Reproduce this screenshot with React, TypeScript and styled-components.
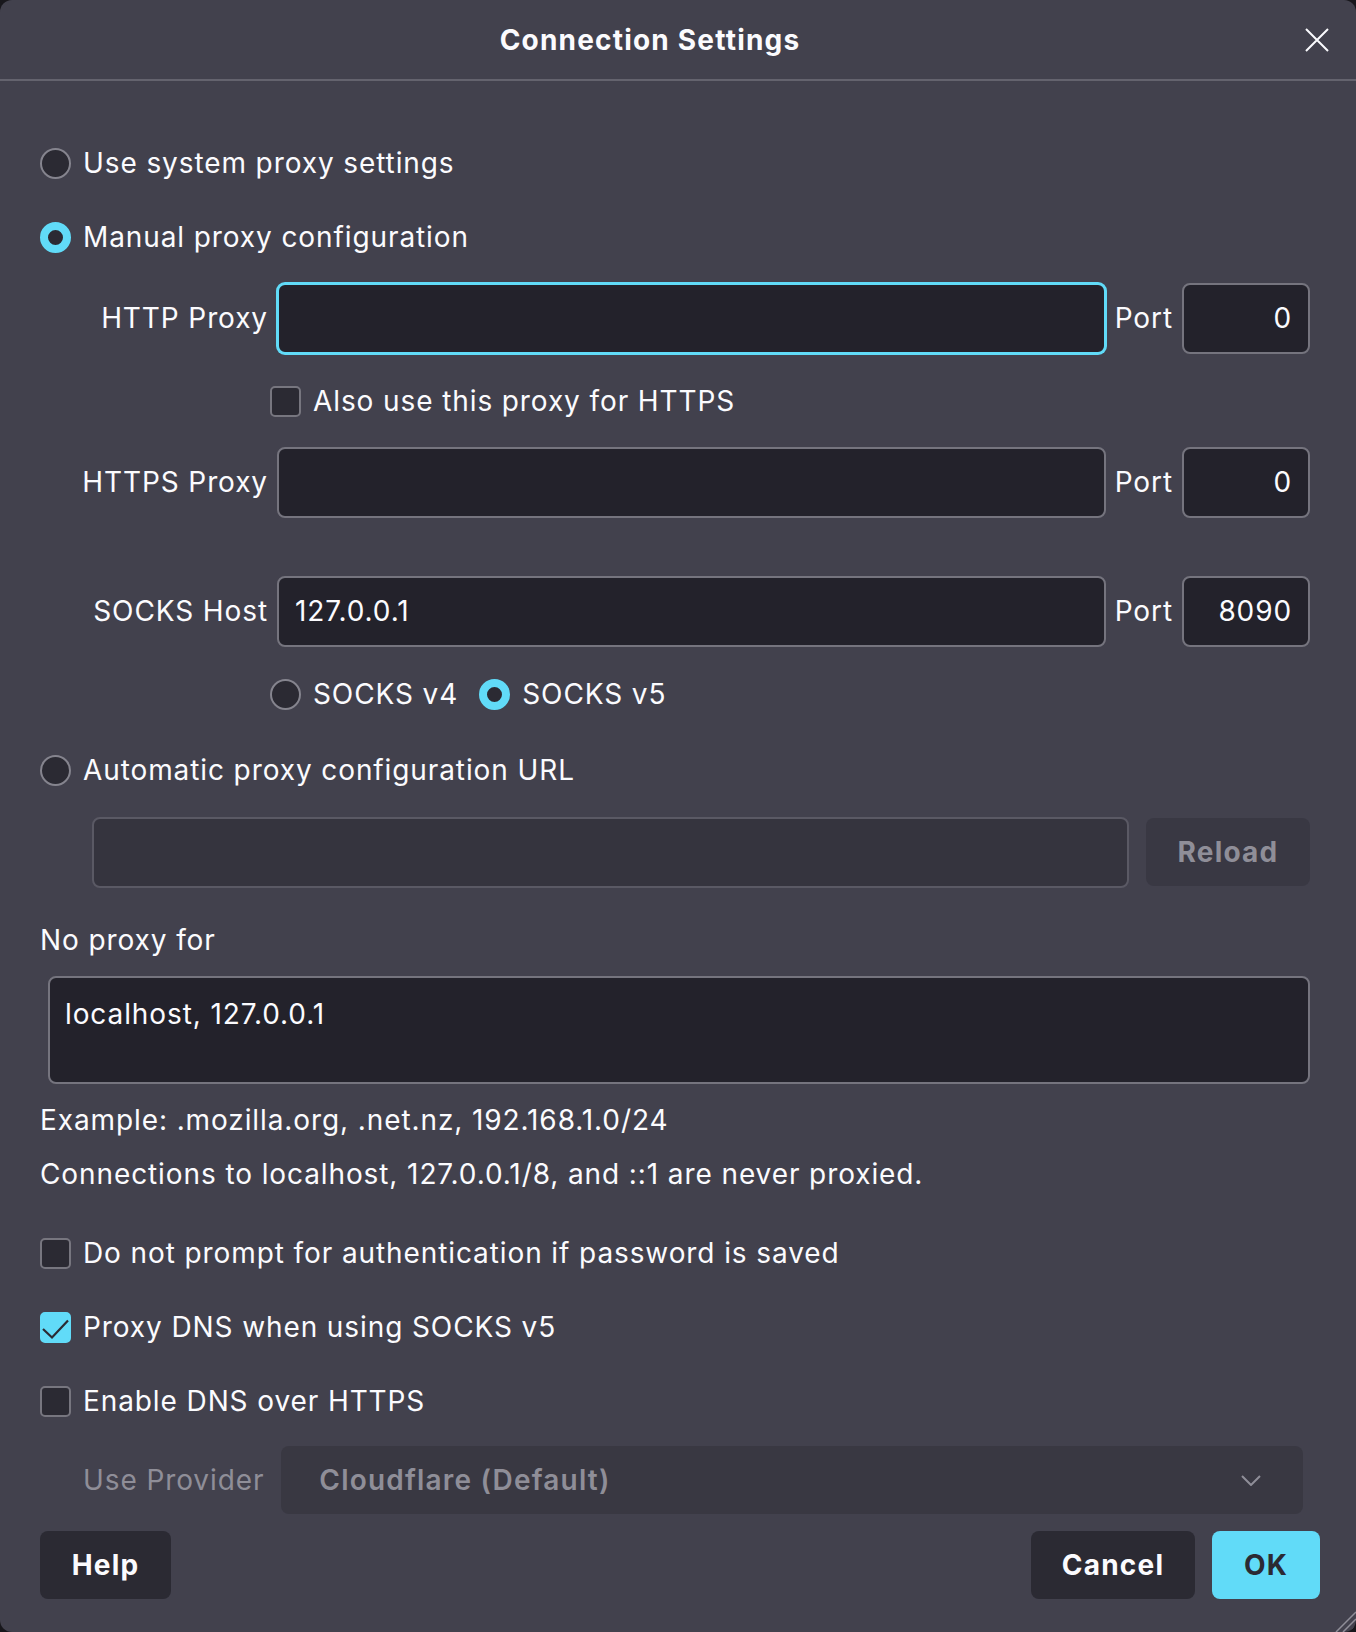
import React from "react";
import styled, { createGlobalStyle } from "styled-components";

const accent = "#61dbf8";

const GlobalStyle = createGlobalStyle`
  html, body {
    margin: 0;
    padding: 0;
    background: #18171c;
  }
  body {
    font-family: Inter, "Noto Sans", sans-serif;
    color: #fbfbfe;
  }
`;

const Dialog = styled.div`
  position: relative;
  width: 1356px;
  height: 1632px;
  box-sizing: border-box;
  background: #42414d;
  border-radius: 12px;
  overflow: hidden;
  display: flex;
  flex-direction: column;
  font-size: 28px;
  letter-spacing: 0.9px;
`;

const Header = styled.header`
  height: 79px;
  border-bottom: 2px solid #64636e;
  display: flex;
  align-items: center;
`;

const Title = styled.h1`
  flex: 1;
  margin: 0;
  text-align: center;
  font-size: 28px;
  font-weight: 700;
  letter-spacing: 1.2px;
`;

const CloseButton = styled.button`
  width: 56px;
  height: 56px;
  padding: 0 27px 0 0;
  border: 0;
  background: transparent;
  display: flex;
  align-items: center;
  justify-content: flex-end;
`;

const Body = styled.div`
  flex: 1;
  display: flex;
  flex-direction: column;
  padding: 0 46px 0 40px;
`;

const Row = styled.div<{ $mt: number; $h?: number; $indent?: number; $gap?: number }>`
  display: flex;
  align-items: center;
  flex: none;
  margin-top: ${(p) => p.$mt}px;
  height: ${(p) => p.$h ?? 40}px;
  padding-left: ${(p) => p.$indent ?? 0}px;
  gap: ${(p) => p.$gap ?? 12}px;
`;

const Radio = styled.span<{ $on?: boolean }>`
  flex: none;
  width: 31px;
  height: 31px;
  box-sizing: border-box;
  border-radius: 50%;
  background: #2b2a33;
  border: ${(p) => (p.$on ? `8px solid ${accent}` : "2px solid #85848e")};
`;

const Check = styled.span<{ $on?: boolean }>`
  flex: none;
  width: 31px;
  height: 31px;
  box-sizing: border-box;
  border-radius: 5px;
  background: ${(p) => (p.$on ? accent : "#2b2a33")};
  border: 2px solid ${(p) => (p.$on ? accent : "#77767f")};
  display: grid;
  place-items: center;
`;

const Label = styled.span<{ $muted?: boolean }>`
  white-space: nowrap;
  color: ${(p) => (p.$muted ? "#8f8e98" : "#fbfbfe")};
`;

const FieldLabel = styled.label`
  flex: none;
  width: 228px;
  text-align: right;
  white-space: nowrap;
`;

const Input = styled.input<{ $focus?: boolean; $w?: number; $align?: string }>`
  flex: ${(p) => (p.$w ? "none" : "1")};
  width: ${(p) => (p.$w ? `${p.$w}px` : "auto")};
  min-width: 0;
  height: 71px;
  box-sizing: border-box;
  margin: 0;
  padding: 0 16px;
  border-radius: 8px;
  background: #23222b;
  border: 2px solid ${(p) => (p.$focus ? accent : "#75747e")};
  box-shadow: ${(p) => (p.$focus ? `0 0 0 1px ${accent}` : "none")};
  color: #fbfbfe;
  font: inherit;
  letter-spacing: inherit;
  text-align: ${(p) => p.$align ?? "left"};
  outline: none;

  &:disabled {
    background: #35343e;
    border-color: #5a5964;
  }
`;

const TextArea = styled.textarea`
  display: block;
  flex: none;
  height: 108px;
  margin: 16px 0 0 8px;
  box-sizing: border-box;
  padding: 16px 15px;
  border-radius: 8px;
  background: #23222b;
  border: 2px solid #75747e;
  color: #fbfbfe;
  font: inherit;
  letter-spacing: inherit;
  line-height: 40px;
  resize: none;
  outline: none;
`;

const Button = styled.button<{ $primary?: boolean; $w: number; $disabled?: boolean }>`
  flex: none;
  width: ${(p) => p.$w}px;
  height: 68px;
  border: 0;
  border-radius: 8px;
  font: inherit;
  font-weight: 700;
  letter-spacing: 1.2px;
  background: ${(p) => (p.$primary ? accent : p.$disabled ? "#393843" : "#2b2a33")};
  color: ${(p) => (p.$primary ? "#2b2a33" : p.$disabled ? "#8f8e98" : "#fbfbfe")};
`;

const Select = styled.div`
  flex: 1;
  height: 68px;
  margin-right: 7px;
  box-sizing: border-box;
  padding: 0 42px 0 38px;
  border-radius: 8px;
  background: #393842;
  color: #8f8e98;
  font-weight: 600;
  letter-spacing: 1.2px;
  display: flex;
  align-items: center;
  justify-content: space-between;
`;

const Footer = styled.div`
  display: flex;
  align-items: center;
  justify-content: space-between;
  margin: 17px -10px 0 0;
  height: 68px;
`;

const ButtonGroup = styled.div`
  display: flex;
  gap: 17px;
`;

const Grip = styled.svg`
  position: absolute;
  right: 0;
  bottom: 0;
`;

function CheckMark() {
  return (
    <svg width="27" height="27" viewBox="0 0 27 27">
      <polyline points="1,15 10,23.5 26,6.5" fill="none" stroke="#2b2a33" strokeWidth="2.2" />
    </svg>
  );
}

export default function App() {
  return (
    <>
      <GlobalStyle />
      <Dialog>
        <Header>
          <Title>Connection Settings</Title>
          <CloseButton aria-label="Close">
            <svg width="24" height="24" viewBox="0 0 24 24">
              <path d="M1 1 L23 23 M23 1 L1 23" stroke="#fbfbfe" strokeWidth="2" />
            </svg>
          </CloseButton>
        </Header>
        <Body>
          <Row $mt={62}>
            <Radio />
            <Label>Use system proxy settings</Label>
          </Row>
          <Row $mt={34}>
            <Radio $on />
            <Label>Manual proxy configuration</Label>
          </Row>
          <Row $mt={25} $h={72} $gap={9}>
            <FieldLabel>HTTP Proxy</FieldLabel>
            <Input $focus readOnly value="" />
            <Label>Port</Label>
            <Input $w={128} $align="right" readOnly value="0" />
          </Row>
          <Row $mt={27} $indent={230}>
            <Check />
            <Label>Also use this proxy for HTTPS</Label>
          </Row>
          <Row $mt={25} $h={72} $gap={9}>
            <FieldLabel>HTTPS Proxy</FieldLabel>
            <Input readOnly value="" />
            <Label>Port</Label>
            <Input $w={128} $align="right" readOnly value="0" />
          </Row>
          <Row $mt={57} $h={72} $gap={9}>
            <FieldLabel>SOCKS Host</FieldLabel>
            <Input readOnly value="127.0.0.1" />
            <Label>Port</Label>
            <Input $w={128} $align="right" readOnly value="8090" />
          </Row>
          <Row $mt={27} $indent={230}>
            <Radio />
            <Label>SOCKS v4</Label>
            <Radio $on style={{ marginLeft: 9 }} />
            <Label>SOCKS v5</Label>
          </Row>
          <Row $mt={36}>
            <Radio />
            <Label>Automatic proxy configuration URL</Label>
          </Row>
          <Row $mt={26} $h={72} $indent={52} $gap={17}>
            <Input disabled value="" readOnly />
            <Button $w={164} $disabled>Reload</Button>
          </Row>
          <Row $mt={32}>
            <Label>No proxy for</Label>
          </Row>
          <TextArea readOnly value="localhost, 127.0.0.1" />
          <Row $mt={16}>
            <Label>Example: .mozilla.org, .net.nz, 192.168.1.0/24</Label>
          </Row>
          <Row $mt={14}>
            <Label>Connections to localhost, 127.0.0.1/8, and ::1 are never proxied.</Label>
          </Row>
          <Row $mt={39}>
            <Check />
            <Label>Do not prompt for authentication if password is saved</Label>
          </Row>
          <Row $mt={34}>
            <Check $on>
              <CheckMark />
            </Check>
            <Label>Proxy DNS when using SOCKS v5</Label>
          </Row>
          <Row $mt={34}>
            <Check />
            <Label>Enable DNS over HTTPS</Label>
          </Row>
          <Row $mt={25} $h={68} $indent={43} $gap={17}>
            <Label $muted>Use Provider</Label>
            <Select>
              <span>Cloudflare (Default)</span>
              <svg width="20" height="11" viewBox="0 0 20 11">
                <polyline points="1,1 10,10 19,1" fill="none" stroke="#8f8e98" strokeWidth="2" />
              </svg>
            </Select>
          </Row>
          <Footer>
            <Button $w={131}>Help</Button>
            <ButtonGroup>
              <Button $w={164}>Cancel</Button>
              <Button $w={108} $primary>OK</Button>
            </ButtonGroup>
          </Footer>
        </Body>
        <Grip width="26" height="26" viewBox="0 0 26 26">
          <path d="M26 6 L6 26 M26 13 L13 26 M26 20 L20 26" stroke="#8f8e98" strokeWidth="1.5" />
        </Grip>
      </Dialog>
    </>
  );
}
